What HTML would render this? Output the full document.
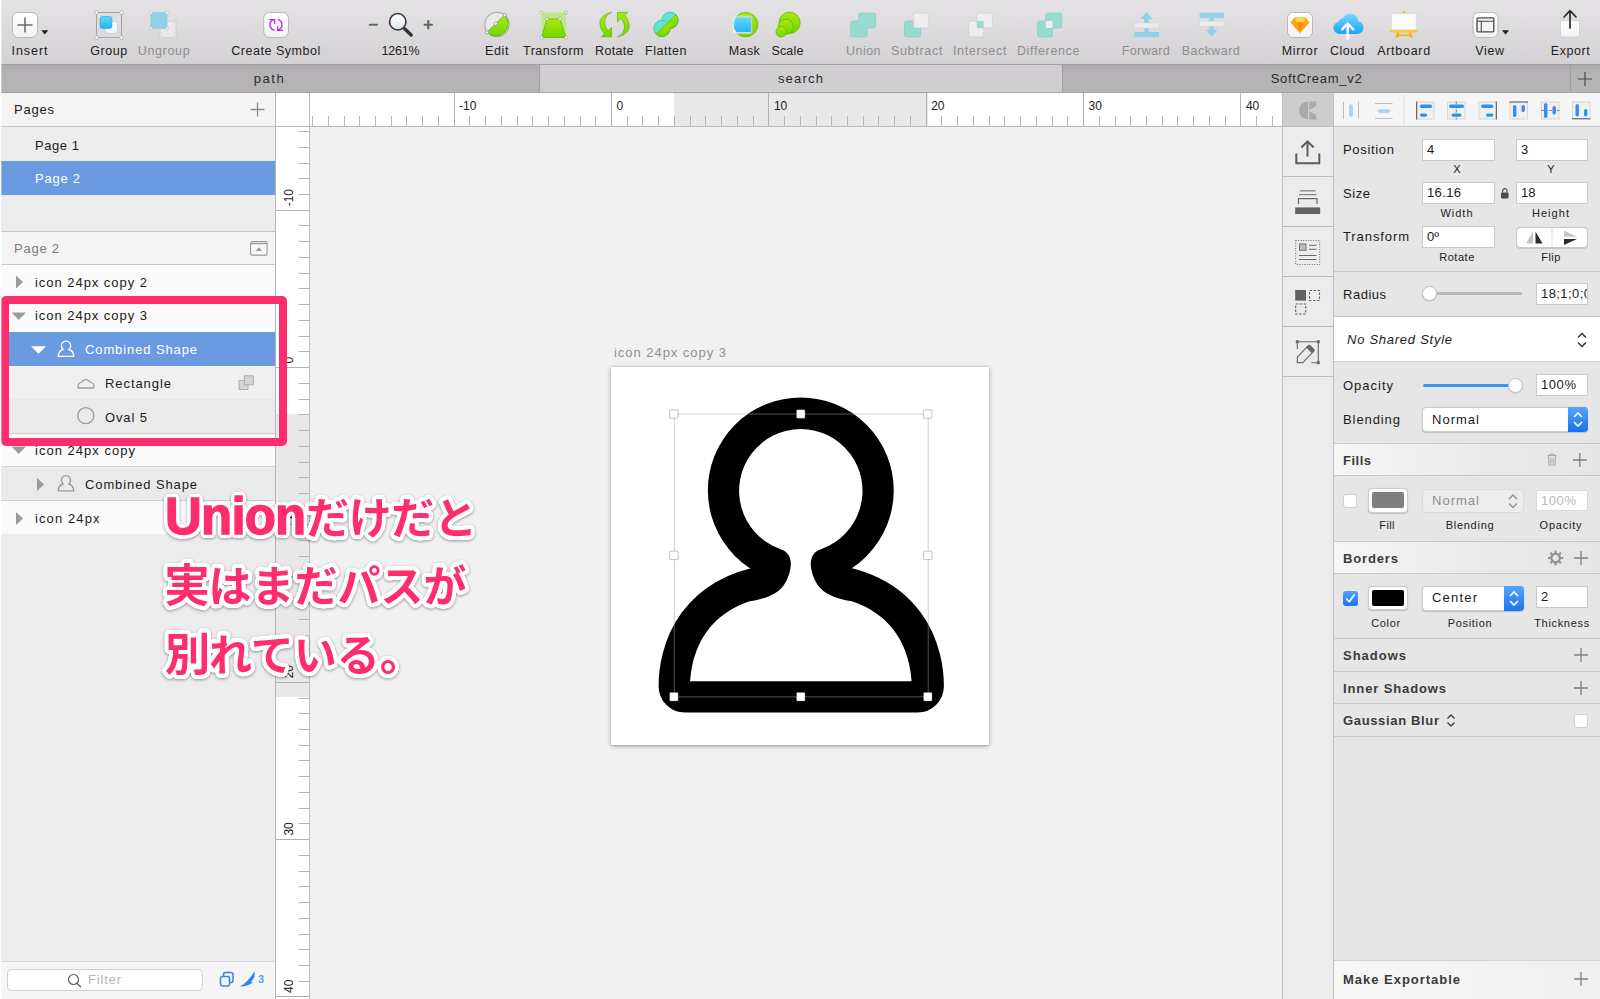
<!DOCTYPE html>
<html lang="ja">
<head>
<meta charset="utf-8">
<title>Sketch - Union</title>
<style>
html,body{margin:0;padding:0;}
body{width:1600px;height:999px;position:relative;overflow:hidden;background:#f1f1f1;font-family:"Liberation Sans","Noto Sans CJK JP",sans-serif;font-size:13px;color:#1d1d1d;}
.abs{position:absolute;}
.pt{white-space:nowrap;line-height:16px;}
#toolbar{position:absolute;left:0;top:0;width:1600px;height:64px;background:linear-gradient(#e5e3e5,#d3d1d3);}
#toolbar-border{position:absolute;left:0;top:64px;width:1600px;height:1px;background:#a09ea0;}
.tl{position:absolute;top:43px;height:16px;line-height:16px;font-size:12.5px;color:#222;white-space:nowrap;transform:translateX(-50%);}
.tl.dis{color:#8e8c8e;}
#tabbar{position:absolute;left:0;top:65px;width:1600px;height:28px;background:#b4b2b4;}
#lstrip{position:absolute;left:0;top:0;width:2px;height:999px;background:linear-gradient(90deg,#fff 0,#fff 1px,rgba(255,255,255,0.35) 1px,rgba(255,255,255,0.35) 2px);}
.tab{position:absolute;top:0;height:28px;line-height:27px;text-align:center;font-size:13px;color:#2a2a2a;}
/* left panel */
#left{position:absolute;left:0;top:93px;width:275px;height:906px;background:#ececec;}
.row{position:absolute;left:0;width:275px;height:33px;line-height:33px;font-size:12.5px;box-sizing:border-box;color:#1b1b1b;white-space:nowrap;}
.sel{background:#6a9be0;color:#fff;}
/* rulers */
#vr{position:absolute;left:276px;top:93px;width:33px;height:906px;background:#fff;}
#hr{position:absolute;left:310px;top:93px;width:972px;height:33px;background:#fff;}
/* right */
#strip{position:absolute;left:1283px;top:93px;width:50px;height:906px;background:#ececec;}
#insp{position:absolute;left:1334px;top:93px;width:266px;height:906px;background:#e6e6e6;}
.lbl{position:absolute;font-size:13px;color:#1b1b1b;white-space:nowrap;line-height:16px;}
.sub{position:absolute;font-size:11px;color:#222;white-space:nowrap;line-height:13px;transform:translateX(-50%);}
.inp{position:absolute;background:#fff;border:1px solid #c9c9c9;box-sizing:border-box;font-size:13px;line-height:20px;padding-left:4px;color:#1b1b1b;white-space:nowrap;overflow:hidden;}
.hd{position:absolute;left:0;width:266px;background:linear-gradient(90deg,#f6f6f6,#e9e9e9 60%,#e6e6e6);border-top:1px solid #c8c8c8;border-bottom:1px solid #c8c8c8;box-sizing:border-box;}
.hd b,.bh{position:absolute;left:9px;font-size:13px;font-weight:bold;color:#3a3a3a;white-space:nowrap;line-height:16px;}
</style>
</head>
<body>
<!-- TOOLBAR -->
<div id="toolbar"></div>
<div id="toolbar-border"></div>
<svg class="abs" style="left:0;top:0" width="1600" height="64" viewBox="0 0 1600 64">
<defs>
<linearGradient id="gBlue" x1="0" y1="0" x2="0" y2="1"><stop offset="0" stop-color="#5fd8ff"/><stop offset="1" stop-color="#27b4f2"/></linearGradient>
<linearGradient id="gGreen" x1="0" y1="0" x2="0" y2="1"><stop offset="0" stop-color="#a6ea10"/><stop offset="1" stop-color="#77d400"/></linearGradient>
<linearGradient id="gWhite" x1="0" y1="0" x2="0" y2="1"><stop offset="0" stop-color="#ffffff"/><stop offset="1" stop-color="#f2f2f2"/></linearGradient>
<linearGradient id="gCloud" x1="0" y1="0" x2="0" y2="1"><stop offset="0" stop-color="#6fdcff"/><stop offset="1" stop-color="#1da1f2"/></linearGradient>
</defs>
<!-- Insert -->
<rect x="12.5" y="12.5" width="25" height="25" rx="5.5" fill="url(#gWhite)" stroke="#b9b7b9" stroke-width="1"/>
<path d="M25 17.5V32.5M17.5 25H32.5" stroke="#6d6d6d" stroke-width="1.6" fill="none"/>
<path d="M41.3 30.2h7l-3.5 4.2z" fill="#1d1d1d"/>
<!-- Group -->
<rect x="96.5" y="12.5" width="25" height="25" fill="none" stroke="#a5a3a5" stroke-width="1"/>
<rect x="105.5" y="21.5" width="12" height="12" rx="2.5" fill="url(#gWhite)" stroke="#c9c9c9" stroke-width="0.8"/>
<rect x="100" y="16.5" width="12" height="12" rx="2.5" fill="url(#gBlue)" stroke="#1fa7e6" stroke-width="0.6"/>
<g fill="#fff" stroke="#a9a7a9" stroke-width="0.8"><circle cx="96.5" cy="12.5" r="1.8"/><circle cx="121.5" cy="12.5" r="1.8"/><circle cx="96.5" cy="37.5" r="1.8"/><circle cx="121.5" cy="37.5" r="1.8"/></g>
<!-- Ungroup -->
<g opacity="0.55">
<rect x="160" y="21.5" width="16" height="16" fill="#f6f6f6" stroke="#c3c1c3" stroke-width="0.8"/>
<rect x="151" y="12.5" width="16" height="16" fill="#52c8ee" stroke="#3bb7e0" stroke-width="0.6"/>
<g fill="#fff" stroke="#aaa" stroke-width="0.7"><circle cx="151" cy="12.5" r="1.6"/><circle cx="167" cy="12.5" r="1.6"/><circle cx="151" cy="28.5" r="1.6"/><circle cx="167" cy="28.5" r="1.6"/><circle cx="176" cy="21.5" r="1.6"/><circle cx="160" cy="37.5" r="1.6"/><circle cx="176" cy="37.5" r="1.6"/></g>
</g>
<!-- Create Symbol -->
<rect x="263.700" y="12.500" width="24.800" height="25" rx="6" fill="url(#gWhite)" stroke="#b9b7b9" stroke-width="1"/>
<g fill="none" stroke="#c22ee2" stroke-width="1.400">
<path d="M274.600 30.400c-3.300-1-4.700-3.500-4.700-5.900c0-2.300 1.500-4.200 4.200-5.100"/><path d="M269.200 19.600h5.400v4.300"/>
<path d="M277.700 19.400c3 1 4.300 3.200 4.300 5.400c0 2.300-1.400 4.400-4.300 5.400"/><path d="M277.700 26.200v4.200h5.200"/>
</g>
<!-- Zoom -->
<path d="M369.800 24.750h7.200" stroke="#666" stroke-width="2.200" stroke-linecap="round"/>
<path d="M424.600 24.750h7.300M428.250 21.100v7.300" stroke="#666" stroke-width="2.200" stroke-linecap="round"/>
<linearGradient id="gLens" x1="0" y1="0" x2="0" y2="1"><stop offset="0" stop-color="#fbfbfb"/><stop offset="0.700" stop-color="#eceef2"/><stop offset="1" stop-color="#c5dcf6"/></linearGradient>
<circle cx="397.750" cy="21.750" r="8.200" fill="url(#gLens)" stroke="#333" stroke-width="1.600"/>
<path d="M404.600 28.800l6.600 6.300" stroke="#353535" stroke-width="3.400" stroke-linecap="round"/>
<!-- Edit -->
<circle cx="497" cy="24.5" r="12.3" fill="#e9e8ea" stroke="#9a989a" stroke-width="0.9"/>
<path d="M486.9 32.3L504.6 15a12.3 12.3 0 0 1-17.7 17.3z" fill="url(#gGreen)" stroke="#5cae00" stroke-width="0.8"/>
<g fill="#fff" stroke="#8a8a8a" stroke-width="0.7"><circle cx="486.9" cy="32.3" r="1.6"/><circle cx="504.6" cy="15" r="1.6"/><circle cx="495.8" cy="23.7" r="1.6"/></g>
<!-- Transform -->
<rect x="541.5" y="12.5" width="24.5" height="25" fill="#bfe68a"/>
<path d="M547 19h13l6 18.5h-24.5z" fill="url(#gGreen)" stroke="#63b800" stroke-width="0.8"/>
<g fill="#fff" stroke="#9a9a9a" stroke-width="0.7"><circle cx="541.5" cy="12.5" r="1.5"/><circle cx="566" cy="12.5" r="1.5"/><circle cx="541.5" cy="37.5" r="1.5"/><circle cx="566" cy="37.5" r="1.5"/><circle cx="547" cy="19" r="1.5"/><circle cx="560" cy="19" r="1.5"/></g>
<!-- Rotate -->
<g fill="url(#gGreen)" stroke="#62b600" stroke-width="0.700" stroke-linejoin="round">
<path id="rotA" d="M611.600 12.400C603 14 599.500 19 600 24C600.300 28 602 31.500 604.300 33.500L601.600 36.800H611.600V27.400L608.300 30.500C605.500 28 604.300 24.500 604.700 21C605.200 17 607.500 14 611.600 12.400Z"/>
<path d="M617.5 36.8C626.1 35.2 629.6 30.2 629.1 25.2C628.8 21.2 627.1 17.7 624.8 15.7L627.5 12.4L617.5 12.4L617.5 21.8L620.8 18.7C623.6 21.2 624.8 24.7 624.4 28.2C623.9 32.2 621.6 35.2 617.5 36.8Z"/>
</g>
<!-- Flatten -->
<clipPath id="flc"><path d="M645 44.100L685.600 5.500V50H645z"/></clipPath>
<g fill="#60e6cf" stroke="#35bda8" stroke-width="0.800"><circle cx="670" cy="20.300" r="8.100"/><circle cx="661.900" cy="28.400" r="8.100"/></g>
<g clip-path="url(#flc)"><g fill="url(#gGreen)" stroke="#62b600" stroke-width="0.800"><circle cx="670" cy="20.300" r="8.100"/><circle cx="661.900" cy="28.400" r="8.100"/></g><path d="M665.500 24.600a6 6 0 0 0 1.500-0.500" fill="none"/><circle cx="666" cy="24.300" r="5.500" fill="#95e008"/></g>
<path d="M655.800 34.200L676 15" stroke="#6cc400" stroke-width="0.800"/>
<!-- Mask -->
<clipPath id="mkc"><circle cx="745.600" cy="24.600" r="11.800"/></clipPath>
<circle cx="745.600" cy="24.600" r="12.200" fill="url(#gGreen)" stroke="#62b600" stroke-width="0.800"/>
<rect x="732.400" y="16.500" width="18.800" height="16.600" rx="1" fill="#e9f3f6" opacity="0.850"/>
<rect x="733.400" y="17.400" width="17.500" height="14.700" fill="url(#gBlue)" clip-path="url(#mkc)"/>
<rect x="732" y="16" width="19.800" height="17.600" rx="1.500" fill="none" stroke="#d6d6d6" stroke-width="0.800"/>
<!-- Scale -->
<g fill="url(#gGreen)" stroke="#62b600" stroke-width="0.800">
<circle cx="789.600" cy="22.800" r="10.600"/><circle cx="785.900" cy="26.800" r="7.500"/><circle cx="781.200" cy="31.800" r="5.200"/>
</g>
<!-- Union -->
<g opacity="0.62">
<path d="M860.700 13h13a2 2 0 0 1 2 2v11a2 2 0 0 1-2 2h-6.500v7a2 2 0 0 1-2 2h-12.500a2 2 0 0 1-2-2v-12a2 2 0 0 1 2-2h6v-6a2 2 0 0 1 2-2z" fill="#6cdac8" stroke="#4cc7b4" stroke-width="0.7"/>
<!-- Subtract -->
<path d="M906.500 21h7.200v5a2 2 0 0 0 2 2h5v7a2 2 0 0 1-2 2h-12.200a2 2 0 0 1-2-2v-12a2 2 0 0 1 2-2z" fill="#6cdac8" stroke="#4cc7b4" stroke-width="0.7"/>
<rect x="913.700" y="13" width="15" height="15" rx="2" fill="#fafafa" stroke="#c6c6c6" stroke-width="0.7"/>
<!-- Intersect -->
<rect x="968.700" y="21" width="15" height="16" rx="2" fill="#fafafa" stroke="#c6c6c6" stroke-width="0.7"/>
<rect x="977" y="13" width="15.500" height="15" rx="2" fill="#fafafa" stroke="#c6c6c6" stroke-width="0.7"/>
<rect x="977" y="21" width="6.700" height="7" fill="#6cdac8"/>
<!-- Difference -->
<rect x="1037.500" y="21" width="15" height="16" rx="2" fill="#6cdac8" stroke="#4cc7b4" stroke-width="0.7"/>
<rect x="1045.700" y="13" width="16" height="15" rx="2" fill="#6cdac8" stroke="#4cc7b4" stroke-width="0.7"/>
<rect x="1045.700" y="21" width="6.800" height="7" fill="#fafafa"/>
</g>
<!-- Forward -->
<g opacity="0.6">
<rect x="1134.500" y="32" width="24.500" height="5.200" fill="#5fcbea"/>
<path d="M1146.500 12l6 7h-3.600v13h-4.800v-13h-3.600z" fill="#5fcbea"/>
<rect x="1134.500" y="23" width="24.500" height="5" fill="#f8f8f8" stroke="#cfcfcf" stroke-width="0.6"/>
<!-- Backward -->
<rect x="1199.500" y="12.700" width="24.500" height="5.200" fill="#5fcbea"/>
<path d="M1211.700 36.800l-6-7h3.600v-12h4.800v12h3.600z" fill="#5fcbea"/>
<rect x="1199.500" y="21.200" width="24.500" height="5" fill="#f8f8f8" stroke="#cfcfcf" stroke-width="0.6"/>
</g>
<!-- Mirror -->
<rect x="1287.500" y="12.500" width="25" height="25" rx="5.500" fill="url(#gWhite)" stroke="#b9b7b9" stroke-width="1"/>
<path d="M1294.800 17h10.400l4.300 5.300-9.500 10.700-9.500-10.700z" fill="#fdae1c"/>
<path d="M1294.800 17h10.400l-1.700 5.300h-7z" fill="#ffd44f"/>
<path d="M1296.500 22.300h7l-3.500 10.700z" fill="#f88a0e"/>
<path d="M1290.500 22.300h6l3.500 10.700zM1309.500 22.300h-6l-3.500 10.700z" fill="#fca016"/>
<!-- Cloud -->
<path d="M1339.500 34a6.200 6.200 0 0 1-1-12.300a6 6 0 0 1 4.700-3.700a8 8 0 0 1 15 3.300a6.400 6.400 0 0 1-1.200 12.700z" fill="url(#gCloud)"/>
<path d="M1347.700 38.500v-14.500M1342.200 29.300l5.500-5.800 5.500 5.800" fill="none" stroke="#fff" stroke-width="2.400" stroke-linecap="round" stroke-linejoin="round"/>
<!-- Artboard -->
<rect x="1402.300" y="10.800" width="3" height="4" rx="1.200" fill="#f2c12e"/>
<path d="M1396.800 32l-1.200 5.700h2.400l1.200-5.700zM1411.400 32l1.200 5.700h-2.400l-1.200-5.700z" fill="#eab420"/>
<rect x="1397" y="34.400" width="14" height="1.700" fill="#eab420"/>
<rect x="1391.300" y="13.600" width="25" height="16.400" rx="1.200" fill="#fbfbfb" stroke="#d6d4d6" stroke-width="0.700"/>
<rect x="1390" y="30.300" width="27.800" height="2.100" rx="0.800" fill="#f5c62f"/>
<!-- View -->
<rect x="1473" y="12.500" width="25" height="25" rx="5.500" fill="url(#gWhite)" stroke="#b9b7b9" stroke-width="1"/>
<rect x="1477" y="17.800" width="16.800" height="14" rx="1" fill="#f4f4f4" stroke="#4a4a4a" stroke-width="1.300"/>
<path d="M1477 21.300h16.800M1481.300 21.300v10.500" stroke="#4a4a4a" stroke-width="1.100" fill="none"/>
<path d="M1502 30.200h7l-3.500 4.200z" fill="#1d1d1d"/>
<!-- Export -->
<rect x="1560.500" y="20.500" width="19" height="16.500" rx="2" fill="url(#gWhite)" stroke="#cfcdcf" stroke-width="0.8"/>
<path d="M1570 28V11M1564 17l6-6.300 6 6.300" fill="none" stroke="#2c2c2c" stroke-width="1.700" stroke-linecap="round" stroke-linejoin="round"/>
</svg>
<div class="tl" style="left:30px"><span style="letter-spacing:0.95px">Insert</span></div>
<div class="tl" style="left:109px"><span style="letter-spacing:0.56px">Group</span></div>
<div class="tl dis" style="left:164px"><span style="letter-spacing:0.67px">Ungroup</span></div>
<div class="tl" style="left:276px"><span style="letter-spacing:0.53px">Create Symbol</span></div>
<div class="tl" style="left:400.500px"><span style="letter-spacing:-0.23px">1261%</span></div>
<div class="tl" style="left:497px"><span style="letter-spacing:0.65px">Edit</span></div>
<div class="tl" style="left:553.500px"><span style="letter-spacing:0.50px">Transform</span></div>
<div class="tl" style="left:614.500px"><span style="letter-spacing:0.33px">Rotate</span></div>
<div class="tl" style="left:666px"><span style="letter-spacing:0.55px">Flatten</span></div>
<div class="tl" style="left:744.500px"><span style="letter-spacing:0.38px">Mask</span></div>
<div class="tl" style="left:787.500px"><span style="letter-spacing:0.18px">Scale</span></div>
<div class="tl dis" style="left:863.500px"><span style="letter-spacing:0.46px">Union</span></div>
<div class="tl dis" style="left:917px"><span style="letter-spacing:0.71px">Subtract</span></div>
<div class="tl dis" style="left:980px"><span style="letter-spacing:0.70px">Intersect</span></div>
<div class="tl dis" style="left:1048.500px"><span style="letter-spacing:0.64px">Difference</span></div>
<div class="tl dis" style="left:1146px"><span style="letter-spacing:0.36px">Forward</span></div>
<div class="tl dis" style="left:1211px"><span style="letter-spacing:0.44px">Backward</span></div>
<div class="tl" style="left:1300px"><span style="letter-spacing:0.67px">Mirror</span></div>
<div class="tl" style="left:1347.500px"><span style="letter-spacing:0.46px">Cloud</span></div>
<div class="tl" style="left:1404px"><span style="letter-spacing:0.72px">Artboard</span></div>
<div class="tl" style="left:1490px"><span style="letter-spacing:0.71px">View</span></div>
<div class="tl" style="left:1570.500px"><span style="letter-spacing:0.57px">Export</span></div>
<!-- TABS -->
<div id="tabbar">
<div class="tab" style="left:0;width:539px;background:linear-gradient(#adabad,#b5b3b5 35%);"><span style="letter-spacing:1.56px">path</span></div>
<div class="tab" style="left:539px;width:524px;background:#d0ced0;border-left:1px solid #a19fa1;border-right:1px solid #a19fa1;box-sizing:border-box;"><span style="letter-spacing:1.19px">search</span></div>
<div class="tab" style="left:1063px;width:507px;background:linear-gradient(#adabad,#b5b3b5 35%);"><span style="letter-spacing:0.72px">SoftCream_v2</span></div>
<div class="tab" style="left:1570px;width:30px;background:linear-gradient(#adabad,#b5b3b5 35%);border-left:1px solid #a19fa1;box-sizing:border-box;"></div>
<svg class="abs" style="left:1577px;top:6px" width="16" height="16"><path d="M8 1v14M1 8h14" stroke="#4a4a4a" stroke-width="1.2"/></svg>
</div>
<div class="abs" style="left:0;top:92px;width:1600px;height:1px;background:#a3a1a3"></div>
<!-- LEFT PANEL -->
<div id="left"></div>
<div class="abs" style="left:0px;top:93px;width:275px;height:33px;background:#f4f4f4;"></div>
<div class="abs" style="left:0px;top:126px;width:275px;height:1px;background:#c6c6c6;"></div>
<div class="abs" style="left:0px;top:160.5px;width:275px;height:34px;background:#6a9be0;"></div>
<div class="abs" style="left:0px;top:231px;width:275px;height:1px;background:#c2c2c2;"></div>
<div class="abs" style="left:0px;top:232px;width:275px;height:32px;background:#f4f4f4;"></div>
<div class="abs" style="left:0px;top:264px;width:275px;height:1px;background:#c6c6c6;"></div>
<div class="abs" style="left:0px;top:265px;width:275px;height:33.5px;background:#fafafa;"></div>
<div class="abs" style="left:0px;top:298.5px;width:275px;height:33.5px;background:#fafafa;"></div>
<div class="abs" style="left:0px;top:332px;width:275px;height:33.7px;background:#6a9be0;"></div>
<div class="abs" style="left:0px;top:365.7px;width:275px;height:33.6px;background:#f0f0f0;"></div>
<div class="abs" style="left:0px;top:399.3px;width:275px;height:34.4px;background:#eaeaea;"></div>
<div class="abs" style="left:0px;top:433.7px;width:275px;height:32.9px;background:#fafafa;"></div>
<div class="abs" style="left:0px;top:466.6px;width:275px;height:34.1px;background:#eaeaea;"></div>
<div class="abs" style="left:0px;top:500.7px;width:275px;height:33.8px;background:#fafafa;"></div>
<div class="abs" style="left:0px;top:298.2px;width:275px;height:1px;background:#d9d9d9;"></div>
<div class="abs" style="left:0px;top:433.3px;width:275px;height:1px;background:#c9c9c9;"></div>
<div class="abs" style="left:0px;top:466.4px;width:275px;height:1px;background:#cfcfcf;"></div>
<div class="abs" style="left:0px;top:500.4px;width:275px;height:1px;background:#cfcfcf;"></div>
<div class="abs pt" style="left:14px;top:102.2px;color:#1b1b1b;font-size:13px;"><span style="letter-spacing:0.78px">Pages</span></div>
<div class="abs pt" style="left:35px;top:137.5px;color:#1b1b1b;font-size:13px;"><span style="letter-spacing:0.56px">Page 1</span></div>
<div class="abs pt" style="left:35px;top:171.2px;color:#fff;font-size:13px;"><span style="letter-spacing:0.76px">Page 2</span></div>
<div class="abs pt" style="left:14px;top:240.9px;color:#7d7d7d;font-size:13px;"><span style="letter-spacing:0.76px">Page 2</span></div>
<div class="abs pt" style="left:35px;top:274.5px;color:#1b1b1b;font-size:13px;"><span style="letter-spacing:0.96px">icon 24px copy 2</span></div>
<div class="abs pt" style="left:35px;top:308.1px;color:#1b1b1b;font-size:13px;"><span style="letter-spacing:0.96px">icon 24px copy 3</span></div>
<div class="abs pt" style="left:85px;top:342.4px;color:#fff;font-size:13px;"><span style="letter-spacing:0.89px">Combined Shape</span></div>
<div class="abs pt" style="left:105px;top:376.0px;color:#1b1b1b;font-size:13px;"><span style="letter-spacing:0.93px">Rectangle</span></div>
<div class="abs pt" style="left:105px;top:409.6px;color:#1b1b1b;font-size:13px;"><span style="letter-spacing:0.88px">Oval 5</span></div>
<div class="abs pt" style="left:35px;top:443.3px;color:#1b1b1b;font-size:13px;"><span style="letter-spacing:1.02px">icon 24px copy</span></div>
<div class="abs pt" style="left:85px;top:476.9px;color:#1b1b1b;font-size:13px;"><span style="letter-spacing:0.89px">Combined Shape</span></div>
<div class="abs pt" style="left:35px;top:510.5px;color:#1b1b1b;font-size:13px;"><span style="letter-spacing:1.11px">icon 24px</span></div>
<svg class="abs" style="left:250px;top:102px" width="15" height="15"><path d="M7.500 0.500v14M0.500 7.500h14" stroke="#8a8a8a" stroke-width="1.300"/></svg>
<svg class="abs" style="left:250px;top:241px" width="18" height="15"><rect x="0.600" y="0.600" width="16.500" height="13.500" rx="1.500" fill="#f7f7f7" stroke="#9b9b9b" stroke-width="1.100"/><path d="M0.600 2.600h16.500" stroke="#9b9b9b" stroke-width="1.200"/><path d="M5.700 10l3.200-3.800 3.200 3.800z" fill="#9b9b9b"/></svg>
<svg class="abs" style="left:0;top:265px" width="275" height="270" viewBox="0 265 275 270">
<g fill="#9b9b9b">
<path d="M16 275.500l7 6.500-7 6.500z"/>
<path d="M11.500 312.500h14.500l-7.250 7.500z"/>
<path d="M11.500 446.500h14.500l-7.250 7.500z"/>
<path d="M37 478l7 6.500-7 6.500z"/>
<path d="M16 512l7 6.500-7 6.500z"/>
</g>
<path d="M31 346.300h15l-7.500 7.500z" fill="#fff"/>
<g fill="none" stroke="#fff" stroke-width="1.300" stroke-linejoin="round">
<path d="M63.200 349.500a4.700 4.700 0 1 1 5.600 0q4.700 1.300 5 6.800h-15.600q0.300-5.500 5-6.800z"/>
</g>
<g fill="none" stroke="#9a9a9a" stroke-width="1.300" stroke-linejoin="round">
<path d="M63.200 484a4.700 4.700 0 1 1 5.600 0q4.700 1.300 5 6.800h-15.600q0.300-5.500 5-6.800z"/>
<path d="M78 387.300q-0.500-4 4-5.300a4.600 4.600 0 0 1 8 0q4.500 1.300 4 5.300q0 0.700-0.700 0.700h-14.600q-0.700 0-0.700-0.700z"/>
<circle cx="85.800" cy="415.700" r="8"/>
</g>
<g fill="#d4d4d4" stroke="#a8a8a8" stroke-width="0.900"><rect x="239" y="380.500" width="9" height="9"/><rect x="244.300" y="375.800" width="9" height="9"/></g>
</svg>
<div class="abs" style="left:0;top:961px;width:275px;height:38px;background:#f5f5f5;border-top:1px solid #d6d6d6;box-sizing:border-box"></div>
<div class="abs" style="left:7px;top:969px;width:196px;height:22px;background:#fff;border:1px solid #d0d0d0;border-radius:4px;box-sizing:border-box"></div>
<div class="abs pt" style="left:88px;top:972.0px;color:#b4b4b4;font-size:13px;"><span style="letter-spacing:0.82px">Filter</span></div>
<svg class="abs" style="left:64px;top:971px" width="20" height="20"><circle cx="9.500" cy="8.500" r="5" fill="none" stroke="#5f5f5f" stroke-width="1.200"/><path d="M13 12.300l4 4" stroke="#5f5f5f" stroke-width="1.300"/></svg>
<svg class="abs" style="left:216px;top:969px" width="56" height="22">
<rect x="4.500" y="7.500" width="9" height="9.500" rx="2" fill="none" stroke="#2f87ee" stroke-width="1.500"/><path d="M7.500 7v-1.500a2 2 0 0 1 2-2h5.500a2 2 0 0 1 2 2v6a2 2 0 0 1-2 2h-1.300" fill="none" stroke="#2f87ee" stroke-width="1.500"/>
<path d="M24 17.500q7-3.500 14.500-15q1.200 6-3.500 10.500l1.800 0.400q-5 4-12.800 4.100z" fill="#2f87ee"/>
</svg>
<div class="abs" style="left:258px;top:973px;font-size:11px;line-height:13px;font-weight:bold;color:#5b9bf0">3</div>
<div class="abs" style="left:275px;top:93px;width:1px;height:906px;background:#b7b7b7"></div>
<!-- RULERS -->
<div id="vr"></div>
<div class="abs" style="left:276px;top:414px;width:33px;height:283px;background:#e8e8e8"></div>
<div id="hr"></div>
<div class="abs" style="left:674px;top:93px;width:254px;height:33px;background:#e8e8e8"></div>
<div class="abs" style="left:276px;top:93px;width:34px;height:33px;background:#fff"></div>
<svg class="abs" style="left:276px;top:93px" width="1007" height="906" viewBox="276 93 1007 906">
<path d="M312.5 116V126M328.5 116V126M344.5 116V126M359.5 116V126M375.5 116V126M391.5 116V126M406.5 116V126M422.5 116V126M438.5 116V126M469.5 116V126M485.5 116V126M501.5 116V126M517.5 116V126M532.5 116V126M548.5 116V126M564.5 116V126M580.5 116V126M595.5 116V126M627.5 116V126M642.5 116V126M658.5 116V126M674.5 116V126M690.5 116V126M705.5 116V126M721.5 116V126M737.5 116V126M753.5 116V126M784.5 116V126M800.5 116V126M816.5 116V126M831.5 116V126M847.5 116V126M863.5 116V126M878.5 116V126M894.5 116V126M910.5 116V126M941.5 116V126M957.5 116V126M973.5 116V126M989.5 116V126M1004.5 116V126M1020.5 116V126M1036.5 116V126M1052.5 116V126M1067.5 116V126M1099.5 116V126M1115.5 116V126M1130.5 116V126M1146.5 116V126M1162.5 116V126M1177.5 116V126M1193.5 116V126M1209.5 116V126M1225.5 116V126M1256.5 116V126M1272.5 116V126M298.500 131.5H309M298.500 147.5H309M298.500 163.5H309M298.500 178.5H309M298.500 194.5H309M298.500 225.5H309M298.500 241.5H309M298.500 257.5H309M298.500 273.5H309M298.500 288.5H309M298.500 304.5H309M298.500 320.5H309M298.500 336.5H309M298.500 351.5H309M298.500 383.5H309M298.500 399.5H309M298.500 414.5H309M298.500 430.5H309M298.500 446.5H309M298.500 462.5H309M298.500 477.5H309M298.500 493.5H309M298.500 509.5H309M298.500 540.5H309M298.500 556.5H309M298.500 572.5H309M298.500 587.5H309M298.500 603.5H309M298.500 619.5H309M298.500 635.5H309M298.500 650.5H309M298.500 666.5H309M298.500 698.5H309M298.500 713.5H309M298.500 729.5H309M298.500 745.5H309M298.500 760.5H309M298.500 776.5H309M298.500 792.5H309M298.500 808.5H309M298.500 823.5H309M298.500 855.5H309M298.500 871.5H309M298.500 886.5H309M298.500 902.5H309M298.500 918.5H309M298.500 934.5H309M298.500 949.5H309M298.500 965.5H309M298.500 981.5H309" stroke="#b6b6b6" stroke-width="1" fill="none"/>
<path d="M454.5 93V126M611.5 93V126M768.5 93V126M926.5 93V126M1083.5 93V126M1240.5 93V126M276 210.5H309M276 367.5H309M276 524.5H309M276 682.5H309M276 839.5H309M276 996.5H309" stroke="#b2b2b2" stroke-width="1" fill="none"/>
<path d="M309.500 93V999M276 126.500H1282.500" stroke="#bcbcbc" stroke-width="1" fill="none"/>
<g font-family="Liberation Sans, sans-serif" font-size="12" fill="#1b1b1b">
<text x="459.1" y="109.500">-10</text>
<text x="616.5" y="109.500">0</text>
<text x="773.9" y="109.500">10</text>
<text x="931.2" y="109.500">20</text>
<text x="1088.5" y="109.500">30</text>
<text x="1245.9" y="109.500">40</text>
<text transform="translate(293 206.3) rotate(-90)">-10</text>
<text transform="translate(293 363.6) rotate(-90)">0</text>
<text transform="translate(293 521.0) rotate(-90)">10</text>
<text transform="translate(293 678.3) rotate(-90)">20</text>
<text transform="translate(293 835.6) rotate(-90)">30</text>
<text transform="translate(293 993.0) rotate(-90)">40</text>
</g>
</svg>
<!-- CANVAS -->
<div class="abs" style="left:614px;top:345px;font-size:13px;line-height:16px;color:#8f8f8f;white-space:nowrap"><span style="letter-spacing:0.96px">icon 24px copy 3</span></div>
<div class="abs" style="left:611px;top:367px;width:378px;height:378px;background:#fff;box-shadow:0 1px 4px rgba(0,0,0,0.36),0 0 1px rgba(0,0,0,0.3)"></div>
<svg class="abs" style="left:611px;top:367px" width="378" height="378" viewBox="611 367 378 378">
<g fill="#000" stroke="#000" stroke-width="31.4" stroke-linejoin="round"><circle cx="800.8" cy="490.4" r="77.25"/><path d="M674.3 686.1C674.3 658.2 686.1 578.2 801.2 578.2C916.4 578.2 928.2 658.2 928.2 686.1V686.1A10.75 10.75 0 0 1 917.5 696.9H685.0A10.75 10.75 0 0 1 674.3 686.1Z"/></g>
<path d="M779.0 548.5C781.0 549.5 783.0 549.9 784.5 550.9C786.0 551.9 787.0 552.9 788.0 554.2C789.0 555.6 789.7 557.2 790.2 559.0C790.7 560.8 790.9 562.6 790.8 565.0C790.6 567.4 790.1 570.8 789.3 573.5C788.5 576.2 787.3 579.1 786.0 581.5C784.7 583.9 783.3 586.1 781.5 588.0C779.7 589.9 777.5 591.6 775.3 593.0C773.1 594.4 770.8 595.4 768.5 596.4C766.2 597.4 763.8 598.0 761.5 598.7C759.2 599.4 756.4 600.2 754.5 600.6C752.6 601.0 750.9 601.0 749.9 601.2L748.4 601.8L744.2 603.3L740.0 605.1L735.8 607.1L731.7 609.3L727.9 611.7L724.2 614.2L720.5 617.0L717.0 620.1L713.8 623.2L710.7 626.6L707.8 630.2L705.2 633.9L702.7 637.8L700.5 641.8L698.5 645.9L696.8 650.1L695.2 654.4L693.8 658.8L692.7 663.2L691.8 667.7L691.0 672.2L690.5 676.7L690.0 681.2L911.6 681.2L911.1 676.7L910.6 672.2L909.8 667.7L908.9 663.2L907.8 658.8L906.4 654.4L904.8 650.1L903.1 645.9L901.1 641.8L898.9 637.8L896.4 633.9L893.8 630.2L890.9 626.6L887.8 623.2L884.6 620.1L881.1 617.0L877.4 614.2L873.7 611.7L869.9 609.3L865.8 607.1L861.6 605.1L857.4 603.3L853.2 601.8L851.7 601.2C850.7 601.0 849.0 601.0 847.1 600.6C845.2 600.2 842.4 599.4 840.1 598.7C837.8 598.0 835.4 597.4 833.1 596.4C830.8 595.4 828.5 594.4 826.3 593.0C824.1 591.6 821.9 589.9 820.1 588.0C818.3 586.1 816.9 583.9 815.6 581.5C814.3 579.1 813.1 576.2 812.3 573.5C811.5 570.8 810.9 567.4 810.8 565.0C810.6 562.6 810.9 560.8 811.4 559.0C811.9 557.2 812.6 555.6 813.6 554.2C814.5 552.9 815.6 551.9 817.1 550.9C818.6 549.9 820.6 549.5 822.6 548.5A61.7 61.7 0 1 0 779.0 548.5Z" fill="#fff"/>
<rect x="674.3" y="414.1" width="253.9" height="282.8" fill="none" stroke="rgba(163,163,163,0.5)" stroke-width="1"/>
<g fill="#fff" stroke="rgba(120,120,120,0.55)" stroke-width="0.8">
<rect x="669.7" y="409.8" width="8.4" height="8.4" rx="0.8"/>
<rect x="796.6" y="409.8" width="8.4" height="8.4" rx="0.8"/>
<rect x="923.6" y="409.8" width="8.4" height="8.4" rx="0.8"/>
<rect x="669.7" y="551.2" width="8.4" height="8.4" rx="0.8"/>
<rect x="923.6" y="551.2" width="8.4" height="8.4" rx="0.8"/>
<rect x="669.7" y="692.6" width="8.4" height="8.4" rx="0.8"/>
<rect x="796.6" y="692.6" width="8.4" height="8.4" rx="0.8"/>
<rect x="923.6" y="692.6" width="8.4" height="8.4" rx="0.8"/>
</g>
</svg>
<!-- RIGHT STRIP -->
<div id="strip"></div>
<div class="abs" style="left:1283px;top:93px;width:50px;height:33px;background:#cdcdcd"></div>
<svg class="abs" style="left:1282px;top:93px" width="52" height="906" viewBox="1282 93 52 906">
<path d="M1282.500 93V999M1333.500 93V999M1283 126.500h50M1283 176.500h50M1283 226.500h50M1283 276.500h50M1283 326.500h50M1283 376.500h50" stroke="#bdbdbd" stroke-width="1" fill="none"/>
<!-- craft C -->
<path d="M1308 101.500a9 9 0 0 0 0 18z" fill="#a9a9a9"/>
<path d="M1309.300 101.500h7v4.300l-7 4.200zM1309.300 119.500h7v-4.300l-7-4.200z" fill="#a9a9a9"/>
<!-- upload -->
<g fill="none" stroke="#5c5c5c" stroke-width="2"><path d="M1307.500 156.500V142M1301.300 147.500l6.200-6.200 6.200 6.200"/><path d="M1296.300 153.500v9.800h23v-9.800"/></g>
<!-- layers -->
<path d="M1300 190.900h15.500M1299 194.700h17.500" stroke="#6a6a6a" stroke-width="1" fill="none"/>
<path d="M1298.500 204v-5.300h18.500v5.300" stroke="#6a6a6a" stroke-width="1.200" fill="none"/>
<rect x="1295.200" y="207.400" width="25" height="6.600" fill="#616161"/>
<!-- text block -->
<rect x="1295.700" y="240.500" width="24" height="24" fill="none" stroke="#6a6a6a" stroke-width="1" stroke-dasharray="1 1.500"/>
<rect x="1299.500" y="244" width="6.500" height="6.300" fill="#bdbdbd" stroke="#6a6a6a" stroke-width="0.900"/>
<path d="M1309 245.300h7.500M1309 249.300h7.500M1299 255.500h17.500M1299 259.500h17.500" stroke="#6a6a6a" stroke-width="1" fill="none"/>
<!-- squares -->
<rect x="1295.200" y="290" width="10.800" height="10.600" fill="#616161"/>
<rect x="1309.500" y="290.500" width="10" height="10" fill="none" stroke="#616161" stroke-width="1.100" stroke-dasharray="2.500 1.500"/>
<rect x="1295.700" y="304" width="10" height="10" fill="none" stroke="#616161" stroke-width="1.100" stroke-dasharray="2.500 1.500"/>
<!-- pencil -->
<path d="M1297.300 349v-7.300h21v21h-7" stroke="#6a6a6a" stroke-width="1.100" fill="none"/>
<g fill="#6a6a6a"><rect x="1295.800" y="340.200" width="3" height="3"/><rect x="1316.800" y="340.200" width="3" height="3"/><rect x="1316.800" y="361.200" width="3" height="3"/></g>
<path d="M1297.300 362.700v-5.500l11-11.500 5.500 5.500-11 11.500z" fill="none" stroke="#6a6a6a" stroke-width="1.200" stroke-linejoin="round"/>
<path d="M1306.300 347.800l3.300-3.400 5.500 5.500-3.300 3.400z" fill="#6a6a6a"/>
</svg>
<!-- INSPECTOR -->
<div id="insp">
<div class="abs" style="left:0;top:0;width:266px;height:33px;background:#f5f5f5;border-bottom:1px solid #c9c9c9"></div>
<svg class="abs" style="left:0;top:0" width="266" height="34" viewBox="1334 93 266 34">
<path d="M1343.500 102v17M1358.500 102v17M1375 103.500h17.500M1375 118.500h17.500" stroke="#bdbdbd" stroke-width="1" fill="none"/>
<rect x="1349" y="104.300" width="4" height="12.400" rx="2" fill="#a9d3f8"/>
<rect x="1378" y="109.200" width="12" height="3.800" rx="1.900" fill="#a9d3f8"/>
<path d="M1404 95v31" stroke="#dedede" stroke-width="1"/>
<g fill="#f0f0f0" stroke="#d6d6d6" stroke-width="1">
<rect x="1416.500" y="102" width="17.500" height="17"/><rect x="1447.500" y="102" width="17.500" height="17"/><rect x="1479" y="102" width="17.500" height="17"/><rect x="1510" y="102" width="17.500" height="17"/><rect x="1541.500" y="102" width="17.500" height="17"/><rect x="1572.500" y="102" width="17.500" height="17"/>
</g>
<path d="M1416.700 101.500v18M1496.300 101.500v18M1509.500 102h18.500M1572 118.800h18.500" stroke="#5a5a5a" stroke-width="1.100" fill="none"/>
<path d="M1456.300 101.500v18M1541 110.500h18.500" stroke="#5a5a5a" stroke-width="0.700" fill="none" stroke-dasharray="3 1"/>
<g fill="#2f8ff5">
<rect x="1419.800" y="104.500" width="12.400" height="3.400" rx="1.700"/><rect x="1419.800" y="113.400" width="7.400" height="3.400" rx="1.700"/>
<rect x="1449" y="104.500" width="15" height="3.400" rx="1.700"/><rect x="1451.500" y="113.400" width="10" height="3.400" rx="1.700"/>
<rect x="1481" y="104.500" width="12.400" height="3.400" rx="1.700"/><rect x="1486" y="113.400" width="7.400" height="3.400" rx="1.700"/>
<rect x="1513" y="105" width="3.400" height="12" rx="1.700"/><rect x="1521.500" y="105" width="3.400" height="7" rx="1.700"/>
<rect x="1544" y="103" width="3.400" height="15" rx="1.700"/><rect x="1552.500" y="106" width="3.400" height="8.600" rx="1.700"/>
<rect x="1575.500" y="104" width="3.400" height="12.400" rx="1.700"/><rect x="1584" y="109" width="3.400" height="7.400" rx="1.700"/>
</g>
</svg>
<!-- Position -->
<div class="lbl" style="left:9px;top:49px"><span style="letter-spacing:0.68px">Position</span></div>
<div class="inp" style="left:88px;top:46px;width:73px;height:22px">4</div>
<div class="inp" style="left:182px;top:46px;width:72px;height:22px">3</div>
<div class="sub" style="left:123px;top:70px">X</div>
<div class="sub" style="left:217px;top:70px">Y</div>
<!-- Size -->
<div class="lbl" style="left:9px;top:93px"><span style="letter-spacing:0.57px">Size</span></div>
<div class="inp" style="left:88px;top:89px;width:73px;height:22px"><span style="letter-spacing:0.36px">16.16</span></div>
<div class="inp" style="left:182px;top:89px;width:72px;height:22px">18</div>
<svg class="abs" style="left:166px;top:94px" width="10" height="13"><rect x="1" y="5.500" width="7.500" height="6" rx="0.800" fill="#4a4a4a"/><path d="M2.700 5.500v-1.800a2.100 2.100 0 0 1 4.200 0v1.800" fill="none" stroke="#4a4a4a" stroke-width="1.100"/></svg>
<div class="sub" style="left:123px;top:114px"><span style="letter-spacing:0.97px">Width</span></div>
<div class="sub" style="left:217px;top:114px"><span style="letter-spacing:1.04px">Height</span></div>
<!-- Transform -->
<div class="lbl" style="left:9px;top:136px"><span style="letter-spacing:0.91px">Transform</span></div>
<div class="inp" style="left:88px;top:133px;width:73px;height:22px">0º</div>
<div class="abs" style="left:182px;top:134px;width:72px;height:21px;background:#fff;border:1px solid #c9c9c9;border-radius:4px;box-sizing:border-box;box-shadow:0 0.500px 1px rgba(0,0,0,0.15)"></div>
<svg class="abs" style="left:182px;top:134px" width="72" height="21"><path d="M36 1v19" stroke="#dcdcdc" stroke-width="1"/><path d="M17 4.500v12h-7z" fill="#c4c4c4"/><path d="M19.500 4.500v12h7z" fill="#2b2b2b"/><path d="M48 9.800h13l-13-6z" fill="#c4c4c4"/><path d="M48 12h13l-13 6z" fill="#2b2b2b"/></svg>
<div class="sub" style="left:123px;top:158px"><span style="letter-spacing:0.52px">Rotate</span></div>
<div class="sub" style="left:217px;top:158px"><span style="letter-spacing:0.42px">Flip</span></div>
<div class="abs" style="left:0;top:178px;width:266px;height:1px;background:#c8c8c8"></div>
<!-- Radius -->
<div class="lbl" style="left:9px;top:194px"><span style="letter-spacing:0.51px">Radius</span></div>
<div class="abs" style="left:95px;top:199px;width:93px;height:3px;border-radius:2px;background:#b9b9b9"></div>
<div class="abs" style="left:88px;top:193px;width:15px;height:15px;border-radius:8px;background:#fff;border:1px solid #c4c4c4;box-sizing:border-box;box-shadow:0 0.500px 1px rgba(0,0,0,0.2)"></div>
<div class="inp" style="left:202px;top:190px;width:52px;height:22px"><span style="letter-spacing:0.43px">18;1;0;0</span></div>
<div class="abs" style="left:0;top:223px;width:266px;height:1px;background:#c8c8c8"></div>
<!-- Shared style -->
<div class="abs" style="left:0;top:224px;width:266px;height:45px;background:#fff;border-bottom:1px solid #cfcfcf;box-sizing:border-box"></div>
<div class="lbl" style="left:13px;top:239px;font-style:italic"><span style="letter-spacing:0.74px">No Shared Style</span></div>
<svg class="abs" style="left:242px;top:238px" width="12" height="18"><path d="M2 6.500l4-4 4 4M2 11.500l4 4 4-4" fill="none" stroke="#2b2b2b" stroke-width="1.400"/></svg>
<!-- Opacity -->
<div class="lbl" style="left:9px;top:285px"><span style="letter-spacing:0.99px">Opacity</span></div>
<div class="abs" style="left:89px;top:291px;width:92px;height:3px;border-radius:2px;background:#3d93f4"></div>
<div class="abs" style="left:174px;top:285px;width:15px;height:15px;border-radius:8px;background:#fff;border:1px solid #c4c4c4;box-sizing:border-box;box-shadow:0 0.500px 1px rgba(0,0,0,0.2)"></div>
<div class="inp" style="left:202px;top:281px;width:52px;height:22px"><span style="letter-spacing:0.58px">100%</span></div>
<!-- Blending -->
<div class="lbl" style="left:9px;top:319px"><span style="letter-spacing:0.91px">Blending</span></div>
<div class="abs" style="left:88px;top:314px;width:166px;height:25px;background:#fff;border:1px solid #cdcdcd;border-radius:4px;box-sizing:border-box;box-shadow:0 0.500px 1px rgba(0,0,0,0.18)"></div>
<div class="abs" style="left:234px;top:314px;width:20px;height:25px;background:linear-gradient(#56a6fb,#1a72f0);border-radius:0 4px 4px 0"></div>
<svg class="abs" style="left:234px;top:314px" width="20" height="25"><path d="M6 10l4-4 4 4M6 15l4 4 4-4" fill="none" stroke="#fff" stroke-width="1.600"/></svg>
<div class="lbl" style="left:98px;top:319px"><span style="letter-spacing:1.02px">Normal</span></div>
<!-- Fills -->
<div class="hd" style="top:350px;height:33px"></div>
<div class="bh" style="top:360px"><span style="letter-spacing:0.50px">Fills</span></div>
<svg class="abs" style="left:210px;top:357px" width="50" height="20"><g fill="none" stroke="#a6a6a6" stroke-width="1"><path d="M3.500 5.500h9M6 5.500v-1.500h4v1.500M4.500 5.500l0.500 9.500h6l0.500-9.500M6.800 7.500v6M9.200 7.500v6"/></g><path d="M35.800 3v14M28.800 10h14" stroke="#808080" stroke-width="1.300"/></svg>
<div class="abs" style="left:9px;top:401px;width:14px;height:14px;background:#fff;border:1px solid #cfcfcf;border-radius:3px;box-sizing:border-box"></div>
<div class="abs" style="left:34px;top:395px;width:40px;height:25px;background:#fff;border:1px solid #cdcdcd;border-radius:4px;box-sizing:border-box;box-shadow:0 0.500px 1px rgba(0,0,0,0.18)"></div>
<div class="abs" style="left:38px;top:399px;width:32px;height:16px;background:#7f7f7f;border-radius:2px"></div>
<div class="abs" style="left:88px;top:396px;width:102px;height:24px;background:#ececec;border:1px solid #d9d9d9;border-radius:4px;box-sizing:border-box"></div>
<div class="lbl" style="left:98px;top:400px;color:#8d8d8d"><span style="letter-spacing:1.02px">Normal</span></div>
<svg class="abs" style="left:172px;top:398px" width="14" height="20"><path d="M3 8l4-4 4 4M3 12.500l4 4 4-4" fill="none" stroke="#8d8d8d" stroke-width="1.300"/></svg>
<div class="inp" style="left:202px;top:397px;width:52px;height:21px;color:#b9b9b9;border-color:#d9d9d9"><span style="letter-spacing:0.58px">100%</span></div>
<div class="sub" style="left:53px;top:426px"><span style="letter-spacing:0.31px">Fill</span></div>
<div class="sub" style="left:136px;top:426px"><span style="letter-spacing:0.74px">Blending</span></div>
<div class="sub" style="left:227px;top:426px"><span style="letter-spacing:0.78px">Opacity</span></div>
<!-- Borders -->
<div class="hd" style="top:448px;height:33px"></div>
<div class="bh" style="top:458px"><span style="letter-spacing:0.86px">Borders</span></div>
<svg class="abs" style="left:212px;top:455px" width="50" height="20"><g transform="translate(9.600 10)"><circle r="4.300" fill="none" stroke="#8f8f8f" stroke-width="2.200"/><g stroke="#8f8f8f" stroke-width="2"><path d="M0 -7.500V-5M0 7.500V5M-7.500 0H-5M7.500 0H5M-5.300 -5.300L-3.600 -3.600M5.300 5.300L3.600 3.600M-5.300 5.300L-3.600 3.600M5.300 -5.300L3.600 -3.600"/></g></g><path d="M35 3v14M28 10h14" stroke="#808080" stroke-width="1.300"/></svg>
<div class="abs" style="left:9px;top:498px;width:15px;height:15px;background:linear-gradient(#4ea1fb,#1d76f2);border-radius:3px"></div>
<svg class="abs" style="left:9px;top:498px" width="15" height="15"><path d="M3.500 7.800l2.800 3 5-7" fill="none" stroke="#fff" stroke-width="1.600" stroke-linecap="round" stroke-linejoin="round"/></svg>
<div class="abs" style="left:34px;top:493px;width:40px;height:24px;background:#fff;border:1px solid #cdcdcd;border-radius:4px;box-sizing:border-box;box-shadow:0 0.500px 1px rgba(0,0,0,0.18)"></div>
<div class="abs" style="left:38px;top:497px;width:32px;height:16px;background:#000;border-radius:2px"></div>
<div class="abs" style="left:88px;top:493px;width:102px;height:25px;background:#fff;border:1px solid #cdcdcd;border-radius:4px;box-sizing:border-box;box-shadow:0 0.500px 1px rgba(0,0,0,0.18)"></div>
<div class="abs" style="left:170px;top:493px;width:20px;height:25px;background:linear-gradient(#56a6fb,#1a72f0);border-radius:0 4px 4px 0"></div>
<svg class="abs" style="left:170px;top:493px" width="20" height="25"><path d="M6 10l4-4 4 4M6 15l4 4 4-4" fill="none" stroke="#fff" stroke-width="1.600"/></svg>
<div class="lbl" style="left:98px;top:497px"><span style="letter-spacing:1.19px">Center</span></div>
<div class="inp" style="left:202px;top:493px;width:52px;height:22px">2</div>
<div class="sub" style="left:52px;top:524px"><span style="letter-spacing:0.68px">Color</span></div>
<div class="sub" style="left:136px;top:524px"><span style="letter-spacing:0.69px">Position</span></div>
<div class="sub" style="left:228px;top:524px"><span style="letter-spacing:0.68px">Thickness</span></div>
<div class="abs" style="left:0;top:545px;width:266px;height:1px;background:#c8c8c8"></div>
<!-- Shadows etc -->
<div class="bh" style="top:555px"><span style="letter-spacing:0.99px">Shadows</span></div>
<svg class="abs" style="left:240px;top:552px" width="16" height="20"><path d="M7 3v14M0 10h14" stroke="#808080" stroke-width="1.300"/></svg>
<div class="abs" style="left:0;top:578px;width:266px;height:1px;background:#c8c8c8"></div>
<div class="bh" style="top:588px"><span style="letter-spacing:0.88px">Inner Shadows</span></div>
<svg class="abs" style="left:240px;top:585px" width="16" height="20"><path d="M7 3v14M0 10h14" stroke="#808080" stroke-width="1.300"/></svg>
<div class="abs" style="left:0;top:610px;width:266px;height:1px;background:#c8c8c8"></div>
<div class="bh" style="top:620px"><span style="letter-spacing:0.65px">Gaussian Blur</span></div>
<svg class="abs" style="left:111px;top:619px" width="12" height="18"><path d="M2.500 6.500l3.500-3.500 3.500 3.500M2.500 10.500l3.500 3.500 3.500-3.500" fill="none" stroke="#3a3a3a" stroke-width="1.300"/></svg>
<div class="abs" style="left:240px;top:621px;width:14px;height:14px;background:#fff;border:1px solid #cfcfcf;border-radius:3px;box-sizing:border-box"></div>
<div class="abs" style="left:0;top:643px;width:266px;height:1px;background:#c8c8c8"></div>
<!-- Make Exportable -->
<div class="abs" style="left:0;top:867px;width:266px;height:39px;background:linear-gradient(90deg,#f7f7f7,#f0f0f0);border-top:1px solid #d0d0d0;box-sizing:border-box"></div>
<div class="bh" style="top:879px"><span style="letter-spacing:0.98px">Make Exportable</span></div>
<svg class="abs" style="left:240px;top:876px" width="16" height="20"><path d="M7 3v14M0 10h14" stroke="#808080" stroke-width="1.300"/></svg>
</div>
<!-- ANNOTATION -->
<style>
.ann{position:absolute;white-space:nowrap;font-weight:bold;font-size:43px;line-height:60px;height:60px;color:#ff2d6c;font-family:"Liberation Sans","Noto Sans CJK JP",sans-serif;text-shadow:3.80px 0.00px 0 #fff,3.73px 0.74px 0 #fff,3.51px 1.45px 0 #fff,3.16px 2.11px 0 #fff,2.69px 2.69px 0 #fff,2.11px 3.16px 0 #fff,1.45px 3.51px 0 #fff,0.74px 3.73px 0 #fff,0.00px 3.80px 0 #fff,-0.74px 3.73px 0 #fff,-1.45px 3.51px 0 #fff,-2.11px 3.16px 0 #fff,-2.69px 2.69px 0 #fff,-3.16px 2.11px 0 #fff,-3.51px 1.45px 0 #fff,-3.73px 0.74px 0 #fff,-3.80px 0.00px 0 #fff,-3.73px -0.74px 0 #fff,-3.51px -1.45px 0 #fff,-3.16px -2.11px 0 #fff,-2.69px -2.69px 0 #fff,-2.11px -3.16px 0 #fff,-1.45px -3.51px 0 #fff,-0.74px -3.73px 0 #fff,-0.00px -3.80px 0 #fff,0.74px -3.73px 0 #fff,1.45px -3.51px 0 #fff,2.11px -3.16px 0 #fff,2.69px -2.69px 0 #fff,3.16px -2.11px 0 #fff,3.51px -1.45px 0 #fff,3.73px -0.74px 0 #fff,2.20px 0.00px 0 #fff,1.91px 1.10px 0 #fff,1.10px 1.91px 0 #fff,0.00px 2.20px 0 #fff,-1.10px 1.91px 0 #fff,-1.91px 1.10px 0 #fff,-2.20px 0.00px 0 #fff,-1.91px -1.10px 0 #fff,-1.10px -1.91px 0 #fff,-0.00px -2.20px 0 #fff,1.10px -1.91px 0 #fff,1.91px -1.10px 0 #fff;filter:drop-shadow(0 1.5px 1.6px rgba(0,0,0,0.38));}
.ann .u{font-size:51px;letter-spacing:-0.8px;-webkit-text-stroke:1.3px #ff2d6c;}
.ann .k{font-size:45.5px;margin:0 -1.25px;}
</style>
<div class="abs" style="left:1px;top:296px;width:286px;height:150px;border:8px solid #ff2d6c;border-radius:5px;box-sizing:border-box"></div>
<div class="ann" style="left:165px;top:487px"><span class="u">Union</span><span style="margin-left:0.5px;letter-spacing:-0.3px">だけだと</span></div>
<div class="ann" style="left:165.5px;top:557px"><span class="k">実</span>はまだパスが</div>
<div class="ann" style="left:166px;top:625.5px"><span class="k">別</span>れている。</div>
<div id="lstrip"></div>
</body>
</html>
